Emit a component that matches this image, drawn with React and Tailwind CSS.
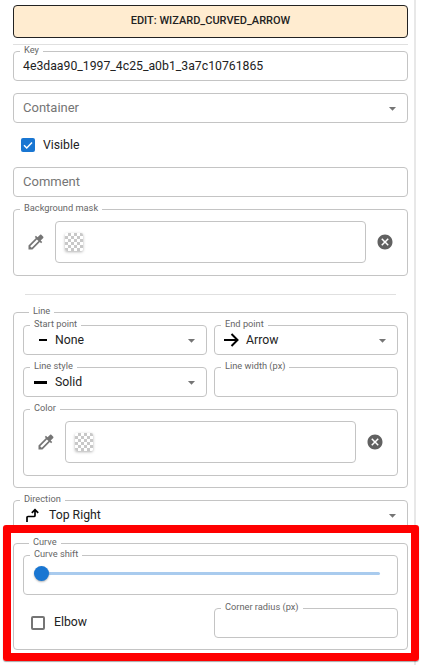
import React from 'react';

const COLORIZE = "M20.71 5.63l-2.34-2.34c-.39-.39-1.02-.39-1.41 0l-3.12 3.12-1.93-1.91-1.41 1.41 1.42 1.42L3 16.25V21h4.75l8.92-8.92 1.42 1.42 1.41-1.41-1.92-1.92 3.12-3.12c.4-.4.4-1.03.01-1.42zM6.92 19L5 17.08l8.06-8.06 1.92 1.92L6.92 19z";
const CANCEL = "M12 2C6.47 2 2 6.47 2 12s4.47 10 10 10 10-4.47 10-10S17.53 2 12 2zm5 13.59L15.59 17 12 13.41 8.41 17 7 15.59 10.59 12 7 8.41 8.41 7 12 10.59 15.59 7 17 8.41 13.41 12 17 15.59z";

// outlined box with a notched label, like an MUI field
function Box({ label, className = '', children }) {
  return (
    <fieldset className={`border border-[#c4c4c4] rounded-[4px] min-w-0 ${className}`}>
      <legend className="ml-[6px] px-[4px] h-3 pb-px text-[9.25px] leading-[10px] text-[#666]">{label}</legend>
      {children}
    </fieldset>
  );
}

function Caret() {
  return (
    <svg width="17" height="17" viewBox="0 0 24 24" className="shrink-0 fill-[#757575]">
      <path d="M7 10l5 5 5-5z" />
    </svg>
  );
}

function Select({ label, icon, iconClass, value }) {
  return (
    <Box label={label}>
      <div className="h-[23px] pb-[5px] flex items-center pr-[6px]">
        <span className={`shrink-0 flex items-center ${iconClass}`}>{icon}</span>
        <span className="flex-1 text-[12.25px] text-[#222]">{value}</span>
        <Caret />
      </div>
    </Box>
  );
}

function ColorField({ label, className = '' }) {
  return (
    <Box label={label} className={className}>
      <div className="flex items-center pt-[6px] pb-3">
        <div className="w-[41px] shrink-0 flex justify-center pl-[2px]">
          <svg width="20" height="20" viewBox="0 0 24 24" className="fill-[#757575]"><path d={COLORIZE} /></svg>
        </div>
        <div className="flex-1 h-[42px] border border-[#c4c4c4] rounded-[4px] flex items-center pl-[9px]">
          <div className="w-[18px] h-[18px] rounded-[2px] shadow-[0_1px_3px_rgba(0,0,0,0.3)] bg-[repeating-conic-gradient(#c8c8c8_0_25%,#ffffff_0_50%)] bg-[length:6px_6px]" />
        </div>
        <div className="w-[41px] shrink-0 flex justify-center pr-[3px]">
          <svg width="18" height="18" viewBox="0 0 24 24" className="fill-[#616161]"><path d={CANCEL} /></svg>
        </div>
      </div>
    </Box>
  );
}

export default function App() {
  return (
    <div className="relative w-[424px] h-[665px] overflow-hidden bg-white font-['Roboto',sans-serif] text-[#222]">
      <div className="w-[416px] h-full border-r-2 border-[#e8e8e8] pl-[13px] pr-[6px] pt-[5px]">
        <div className="h-[33px] bg-[#ffecd0] border border-[#222] rounded-[4px] flex items-center justify-center text-[11px] font-medium">
          EDIT: WIZARD_CURVED_ARROW
        </div>
        <div className="mt-[6px] h-px bg-[#e0e0e0]" />

        <Box label="Key">
          <div className="h-[23px] pb-[5px] flex items-center pl-[9px] text-[12.25px]">4e3daa90_1997_4c25_a0b1_3a7c10761865</div>
        </Box>

        <div className="mt-3 h-[30px] border border-[#c4c4c4] rounded-[4px] flex items-center pl-[9px] pr-[6px] text-[13px] text-[#757575]">
          <span className="flex-1">Container</span>
          <Caret />
        </div>

        <label className="mt-[14px] h-[16px] flex items-center pl-[8px] text-[12.25px]">
          <span className="w-[14px] h-[14px] rounded-[2px] bg-[#1976d2] flex items-center justify-center">
            <svg width="12" height="12" viewBox="0 0 24 24" fill="none" stroke="#fff" strokeWidth="3"><path d="M4 12.5l5.5 5.5L20 7" /></svg>
          </span>
          <span className="ml-2">Visible</span>
        </label>

        <div className="mt-[14px] h-[30px] border border-[#c4c4c4] rounded-[4px] flex items-center pl-[9px] text-[13px] text-[#757575]">
          Comment
        </div>

        <ColorField label="Background mask" className="mt-[6px]" />

        <div className="mt-[18px] mx-3 h-px bg-[#e0e0e0]" />

        <Box label="Line" className="mt-[11px] px-[9px] pt-px pb-[11px]">
          <div className="grid grid-cols-2 gap-x-[7px] gap-y-[6px]">
            <Select
              label="Start point"
              iconClass="w-[31px] pl-[15px]"
              icon={<span className="w-2 h-[2.5px] bg-black" />}
              value="None"
            />
            <Select
              label="End point"
              iconClass="w-[31px] pl-[9px]"
              icon={
                <svg width="15" height="14" viewBox="0 0 15 14" fill="none" stroke="#000" strokeWidth="2"><path d="M0 7h13M7.5 1l6 6-6 6" /></svg>
              }
              value="Arrow"
            />
            <Select
              label="Line style"
              iconClass="w-[31px] pl-[10px]"
              icon={<span className="w-[13px] h-[3px] bg-black" />}
              value="Solid"
            />
            <Box label="Line width (px)">
              <div className="h-[23px]" />
            </Box>
          </div>
          <ColorField label="Color" className="mt-[6px]" />
        </Box>

        <Box label="Direction" className="mt-[6px]">
          <div className="h-[23px] pb-[5px] flex items-center pr-[6px]">
            <span className="w-[35px] pl-[12px] shrink-0 flex items-center">
              <svg width="13" height="14" viewBox="0 0 13 14" fill="none" stroke="#000" strokeWidth="1.7"><path d="M1 14V9.5a1 1 0 0 1 1-1h6a1 1 0 0 0 1-1V2M5.8 4.8L9 1.6l3.2 3.2" /></svg>
            </span>
            <span className="flex-1 text-[12.25px]">Top Right</span>
            <Caret />
          </div>
        </Box>

        <Box label="Curve" className="mt-[7px] px-[9px] pb-[11px]">
          <Box label="Curve shift">
            <div className="h-[33px] pl-[10px] pr-[17px] pt-[5px]">
              <div className="relative h-[15px] flex items-center">
                <div className="w-full h-[3px] rounded-full bg-[#a9cbee]" />
                <div className="absolute left-0 top-0 w-[15px] h-[15px] rounded-full bg-[#1976d2] shadow-[0_1px_2px_rgba(0,0,0,0.3)]" />
              </div>
            </div>
          </Box>
          <div className="mt-[7px] grid grid-cols-2 gap-x-[7px]">
            <label className="flex items-center pl-[8px] pt-[5px] text-[12.25px]">
              <span className="w-[14px] h-[14px] rounded-[2px] border-2 border-[#757575]" />
              <span className="ml-[9px]">Elbow</span>
            </label>
            <Box label="Corner radius (px)">
              <div className="h-[23px]" />
            </Box>
          </div>
        </Box>
      </div>

      {/* red highlight frame laid over the curve section */}
      <div className="absolute left-[3px] top-[525px] w-[416px] h-[136px] border-8 border-[#ff0000] rounded-[3px] shadow-[0_1px_1px_rgba(0,0,0,0.35)]" />
    </div>
  );
}
